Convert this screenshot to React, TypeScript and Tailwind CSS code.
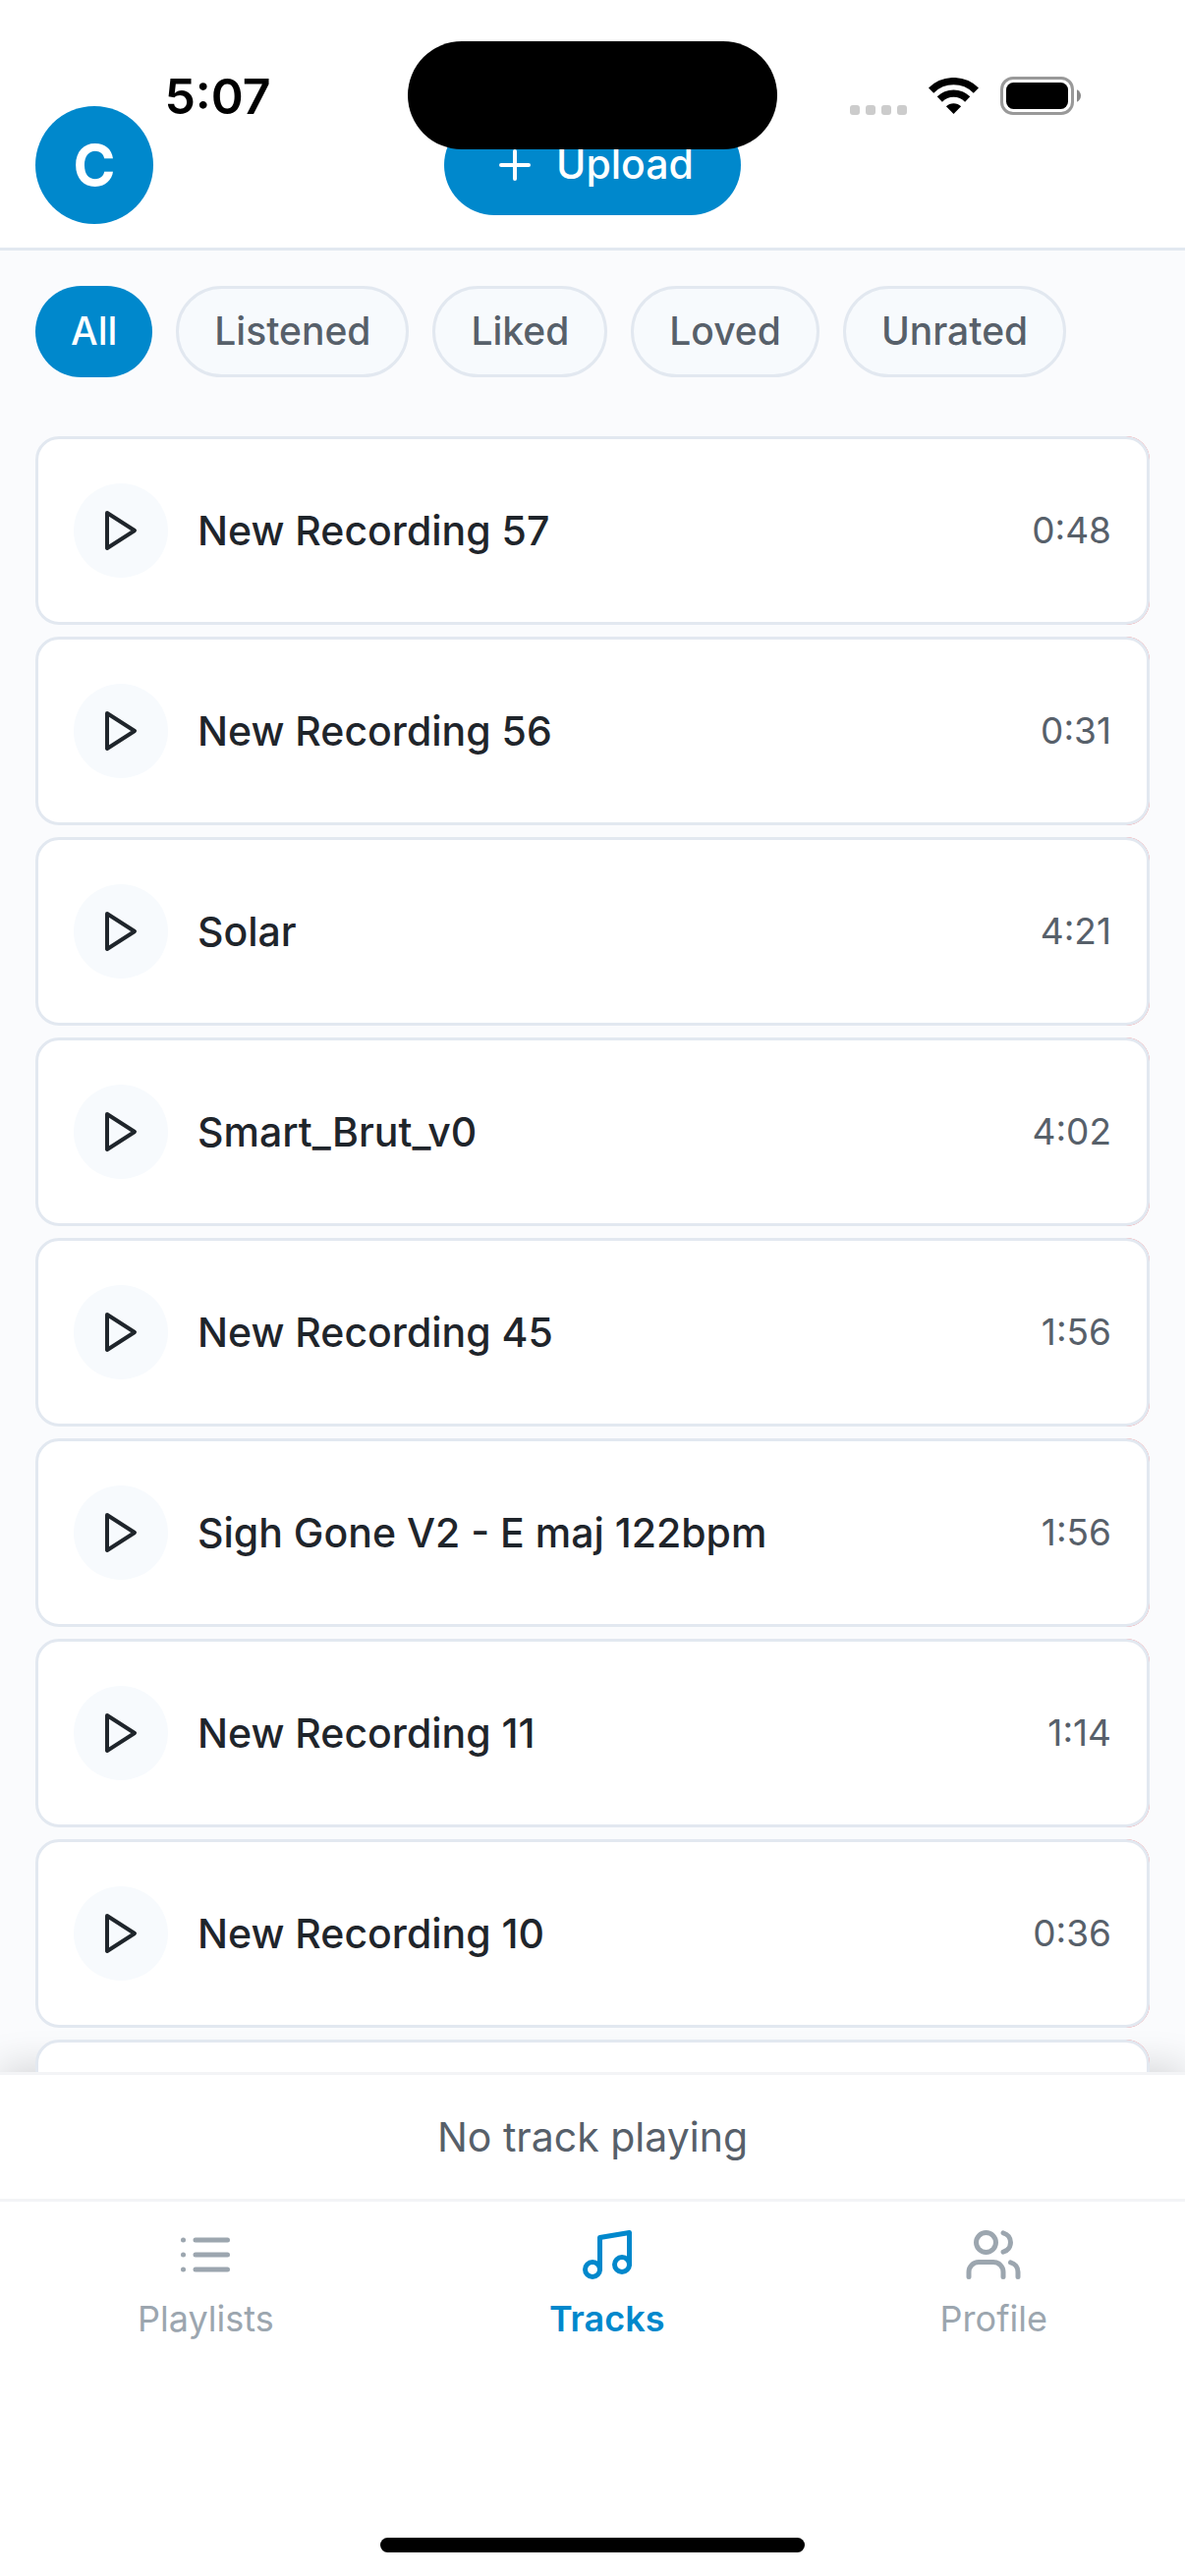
import { Music, Plus, Users } from "lucide-react";

const filters = ["All", "Listened", "Liked", "Loved", "Unrated"];

const tracks = [
  { title: "New Recording 57", duration: "0:48" },
  { title: "New Recording 56", duration: "0:31" },
  { title: "Solar", duration: "4:21" },
  { title: "Smart_Brut_v0", duration: "4:02" },
  { title: "New Recording 45", duration: "1:56" },
  { title: "Sigh Gone V2 - E maj 122bpm", duration: "1:56" },
  { title: "New Recording 11", duration: "1:14" },
  { title: "New Recording 10", duration: "0:36" },
  { title: "", duration: "" },
];

function ListIcon() {
  return (
    <svg
      viewBox="0 0 24 24"
      className="size-15"
      fill="none"
      stroke="currentColor"
      strokeWidth="2"
      strokeLinecap="round"
      strokeLinejoin="round"
      aria-hidden="true"
    >
      <path d="M8 6h13M8 12h13M8 18h13M3 6h.01M3 12h.01M3 18h.01" />
    </svg>
  );
}

const tabs = [
  { label: "Playlists", icon: <ListIcon />, active: false },
  { label: "Tracks", icon: <Music className="size-15" aria-hidden="true" />, active: true },
  { label: "Profile", icon: <Users className="size-15" aria-hidden="true" />, active: false },
];

function PlayIcon() {
  return (
    <svg
      viewBox="0 0 24 24"
      className="size-12"
      fill="none"
      stroke="currentColor"
      strokeWidth="2"
      strokeLinecap="round"
      strokeLinejoin="round"
      aria-hidden="true"
    >
      <polygon points="5 3 19 12 5 21 5 3" />
    </svg>
  );
}

function WifiIcon() {
  return (
    <svg viewBox="0 0 51 37" className="h-[37px] w-[51px]" aria-hidden="true">
      <g fill="none" stroke="#000" strokeWidth="7.4">
        <path d="M2.6 13.1A32.5 32.5 0 0 1 48.4 13.1" />
        <path d="M11.3 22A20.2 20.2 0 0 1 39.7 22" />
      </g>
      <path d="M25.5 37L17.9 29.3A10.8 10.8 0 0 1 33.1 29.3Z" />
    </svg>
  );
}

function BatteryIcon() {
  return (
    <svg viewBox="0 0 82 39" className="h-[39px] w-[82px]" aria-hidden="true">
      <rect x="1.5" y="1.5" width="72" height="36" rx="11.5" fill="none" stroke="#999" strokeWidth="3" />
      <rect x="6" y="6" width="63" height="27" rx="7.5" />
      <path d="M78 13.3c2.4 1 4 3.400 4 6.200s-1.600 5.200-4 6.200z" fill="#888" />
    </svg>
  );
}

function StatusBar() {
  return (
    <div className="pointer-events-none absolute inset-x-0 top-0 z-20 grid grid-cols-[1fr_376px_1fr] items-start pt-[42px]">
      <div className="flex justify-center pt-6 pl-7">
        <span className="text-[50px] leading-[64px] font-semibold text-black">5:07</span>
      </div>
      <div className="h-[110px] rounded-full bg-black" />
      <div className="flex items-center justify-center pt-9 pr-8">
        <div className="flex gap-1.5 pt-7">
          <span className="size-2.5 rounded-[3px] bg-[#ccc]" />
          <span className="size-2.5 rounded-[3px] bg-[#ccc]" />
          <span className="size-2.5 rounded-[3px] bg-[#ccc]" />
          <span className="size-2.5 rounded-[3px] bg-[#ccc]" />
        </div>
        <div className="ml-[22px] flex items-center gap-[22px]">
          <WifiIcon />
          <BatteryIcon />
        </div>
      </div>
    </div>
  );
}

export default function App() {
  return (
    <div className="relative flex h-screen flex-col overflow-hidden bg-[#fafbfd] font-['Inter',sans-serif] text-[#1f252b]">
      <StatusBar />

      <header className="grid grid-cols-3 items-center border-b-3 border-[#e2e8f0] bg-white px-9 pt-[108px] pb-6">
        <button
          type="button"
          aria-label="Account"
          className="flex size-30 items-center justify-center rounded-full bg-[#0088cc] text-[58px] font-bold text-white"
        >
          C
        </button>
        <button
          type="button"
          className="flex h-[102px] items-center gap-[18px] justify-self-center rounded-full bg-[#0088cc] px-12 text-[41px] font-medium text-white"
        >
          <Plus className="size-12" strokeWidth={2} aria-hidden="true" />
          Upload
        </button>
      </header>

      <main className="relative flex-1 overflow-hidden px-9 pt-9">
        <div className="absolute inset-x-0 top-full h-32 shadow-[0_-6px_36px_rgba(0,0,0,0.15)]" />

        <div className="relative flex gap-6">
          {filters.map((name, i) => (
            <button
              key={name}
              type="button"
              aria-pressed={i === 0}
              className={
                i === 0
                  ? "h-[93px] rounded-full bg-[#0088cc] px-9 text-[39px] font-medium text-white"
                  : "h-[93px] rounded-full border-3 border-[#e2e8f0] bg-[#f7fafd] px-9 text-[39px] font-medium text-[#57606a]"
              }
            >
              {name}
            </button>
          ))}
        </div>

        <ul className="relative mt-15 flex flex-col gap-3">
          {tracks.map((track, i) => (
            <li
              key={i}
              className="rounded-3xl bg-[linear-gradient(to_right,transparent_50%,#ff6b6b_50%)]"
            >
              <div className="flex h-48 items-center rounded-3xl border-3 border-[#e2e8f0] bg-white px-9">
                <button
                  type="button"
                  aria-label="Play"
                  className="flex size-24 items-center justify-center rounded-full bg-[#f7fafd]"
                >
                  <PlayIcon />
                </button>
                <span className="ml-[30px] flex-1 text-[41px] leading-[54px] font-medium">{track.title}</span>
                <span className="text-[37px] leading-[48px] text-[#57606a]">{track.duration}</span>
              </div>
            </li>
          ))}
        </ul>
      </main>

      <section className="relative border-t-3 border-[#f3f4f6] bg-white py-9 text-center text-[41px] leading-[54px] text-[#57606a]">
        No track playing
      </section>

      <nav className="relative flex h-[384px] items-start justify-around border-t-3 border-[#f3f4f6] bg-white pt-6">
        {tabs.map(({ label, icon, active }) => (
          <a
            key={label}
            href="#"
            aria-current={active ? "page" : undefined}
            className={
              active
                ? "flex flex-col items-center gap-3 text-[36px] leading-[46px] font-semibold text-[#0088cc]"
                : "flex flex-col items-center gap-3 text-[36px] leading-[46px] text-[#9ca6af]"
            }
          >
            {icon}
            {label}
          </a>
        ))}
        <div className="absolute inset-x-0 bottom-6 mx-auto h-[15px] w-[432px] rounded-full bg-black" />
      </nav>
    </div>
  );
}
